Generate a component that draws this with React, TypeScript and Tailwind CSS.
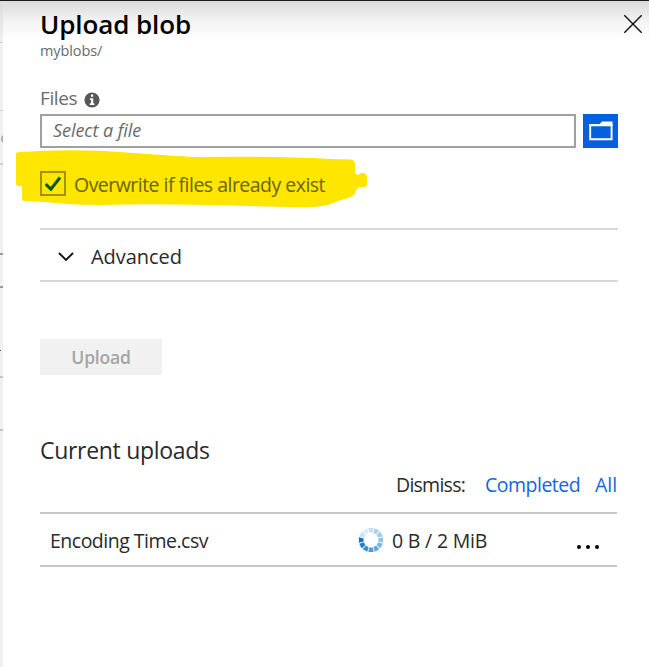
import React from "react";

const segments = [
  "#0a74c9", "#c9e1f4", "#dcebf8", "#c4def2", "#a9d0ee", "#a3cbea",
  "#8fc1e8", "#7db6e4", "#62a6dd", "#4b9ad9", "#3a90d5", "#1f80cd",
];

function Spinner() {
  return (
    <svg width="26" height="26" viewBox="-13 -13 26 26" className="shrink-0">
      {segments.map((color, i) => (
        <path
          key={i}
          d="M-12.1 -2.7L-7.4 -1.6L-7.4 1.6L-12.1 2.7Z"
          fill={color}
          transform={`rotate(${i * 30})`}
        />
      ))}
    </svg>
  );
}

function Backdrop() {
  return (
    <div className="flex w-[3px] shrink-0 flex-col overflow-hidden border-t border-[#1c1a1e] bg-[#f0f0f0]">
      <div className="h-[42px] border-b border-[#d0d0d0] bg-linear-to-b from-[#dcdbdc] to-[#f0f0f0]" />
      <div className="h-[68px] border-b border-[#d0d0d0]" />
      <div className="flex h-[54px] items-center border-b-2 border-[#d0d0d0]">
        <div className="mt-[4px] ml-[1px] h-[8px] w-[8px] shrink-0 rounded-full border-2 border-[#aaa]" />
      </div>
      <div className="h-[90px] border-b-2 border-[#9a9a9a]" />
      <div className="h-[33px] border-b-2 border-[#9a9a9a]" />
      <div className="flex h-[90px] items-center border-b-2 border-[#c4c4c4]">
        <div className="mt-[36px] h-px w-[1px] bg-[#555]" />
      </div>
      <div className="h-[53px] border-b-2 border-[#c4c4c4]" />
    </div>
  );
}

export default function App() {
  return (
    <div className="flex h-[667px] w-[649px] overflow-hidden bg-white font-['Open_Sans','Noto_Sans',sans-serif] whitespace-nowrap text-[#2a2a2a]">
      <Backdrop />
      <main className="flex w-[646px] flex-col border-t border-[#1c1a1e] bg-linear-to-b from-[#dbdadb] via-[#f3f3f3] via-[20px] to-white to-[40px] pr-[31px] pl-[37px]">
        <header className="flex h-[60px] justify-between">
          <div>
            <h1 className="mt-[5px] h-[34px] text-[26px] leading-[37px] font-semibold tracking-[-0.1px] text-black">Upload blob</h1>
            <p className="text-[14.5px] leading-[21px] tracking-[-0.1px] text-[#6a6a6a]">myblobs/</p>
          </div>
          <svg width="20" height="20" viewBox="0 0 20 20" className="mt-[13px] -mr-[25px]" stroke="#111" strokeWidth="1.4">
            <path d="M1.3 1.3L18.7 18.7M18.7 1.3L1.3 18.7" />
          </svg>
        </header>
        <div className="mt-[24px] flex h-[28px] items-center gap-[6px]">
          <span className="w-[38px] pb-[1px] text-[19px] leading-[27px] tracking-[-0.4px] text-[#6a6a6a]">Files</span>
          <svg width="16" height="16" viewBox="0 0 16 16" className="mt-[1px]">
            <circle cx="8" cy="8" r="7.6" fill="#575757" />
            <path d="M6.9 2.6h2.3v2.2H6.9zM5.8 6.3h3.4v5h1.2V13H5.8v-1.7H7V7.8H5.8z" fill="white" />
          </svg>
        </div>
        <div className="flex gap-[7px]">
          <div className="mt-[1px] h-[34px] w-[536px] border-2 border-[#a0a0a0] bg-white pl-[11px] text-[18px] leading-[28px] tracking-[-0.05px] text-[#6a6a6a] italic">Select a file</div>
          <div className="mt-[1px] flex h-[34px] w-[35px] items-center justify-center bg-[#0460dc]">
            <svg width="24" height="20" viewBox="0 0 24 20">
              <path d="M1.2 4.2H22.6V18.3H1.2Z" fill="none" stroke="white" strokeWidth="1.9" />
              <path d="M10.5 3.3L13 0.6H23.5V5H0.3V3.3Z" fill="white" />
            </svg>
          </div>
        </div>
        <div className="relative mt-[18px] flex h-[36px] items-center">
          <svg width="360" height="62" viewBox="12 148 360 62" className="absolute -top-[18px] -left-[28px]">
            <path d="M16 154Q16 152 20 152Q60 149 105 151L170 155.5L195 157Q280 156 330 159L351 159.5Q355 160 355 164V173L358 175L361 173H364Q367 174 367 178V184Q367 187 364 187H359Q356 189 355 194L351 197Q340 200 328 205Q315 208 290 207L245 206Q160 203 100 205Q70 205 45 202L24 201Q22 201 22 198V186H18Q16 186 16 184Z" fill="#ffe600" />
          </svg>
          <div className="relative -mt-[1px] flex h-[25px] w-[26px] items-center justify-center border-2 border-[#a09200]">
            <svg width="18" height="18" viewBox="0 0 18 18" fill="none" stroke="#055b05" strokeWidth="3">
              <path d="M1.7 9.2L6.9 14.2L16 2.5" />
            </svg>
          </div>
          <span className="relative mt-[1px] ml-[8px] text-[19.5px] leading-[28px] tracking-[-0.52px] text-[#6a6400]">Overwrite if files already exist</span>
        </div>
        <section className="mt-[26px] flex h-[54px] items-center border-y-2 border-[#d8d8d8] pl-[18px]">
          <svg width="16" height="10" viewBox="0 0 16 10" className="mt-[3px]" fill="none" stroke="#111" strokeWidth="1.9">
            <path d="M1 1L8 8L15 1" />
          </svg>
          <span className="mt-[3px] ml-[17px] text-[20px] leading-[28px] tracking-[-0.05px]">Advanced</span>
        </section>
        <button className="mt-[57px] h-[36px] w-[122px] bg-[#f1f1f1] text-[17.5px] leading-[35px] font-semibold tracking-[-0.2px] text-[#a5a5a5]">Upload</button>
        <h2 className="mt-[57px] h-[36px] text-[23px] leading-[36px] tracking-[-0.3px]">Current uploads</h2>
        <div className="mt-[3px] flex h-[28px] pl-[356px] text-[19.5px] leading-[28px]">
          <span className="w-[89px] tracking-[-0.75px]">Dismiss:</span>
          <span className="w-[110px] tracking-[-0.5px] text-[#1366e0]">Completed</span>
          <span className="text-[#1366e0]">All</span>
        </div>
        <div className="mt-[13px] flex h-[55px] w-[577px] items-center border-y-2 border-[#c8c8c8] pl-[10px] text-[19.5px]">
          <span className="mt-[3px] w-[308px] tracking-[-0.5px]">Encoding Time.csv</span>
          <Spinner />
          <span className="mt-[3px] ml-[8px] w-[185px] tracking-[-0.2px]">0 B / 2 MiB</span>
          <div className="mt-[15px] flex gap-[5px]">
            <i className="h-[4px] w-[4px] rounded-full bg-black" />
            <i className="h-[4px] w-[4px] rounded-full bg-black" />
            <i className="h-[4px] w-[4px] rounded-full bg-black" />
          </div>
        </div>
      </main>
    </div>
  );
}
